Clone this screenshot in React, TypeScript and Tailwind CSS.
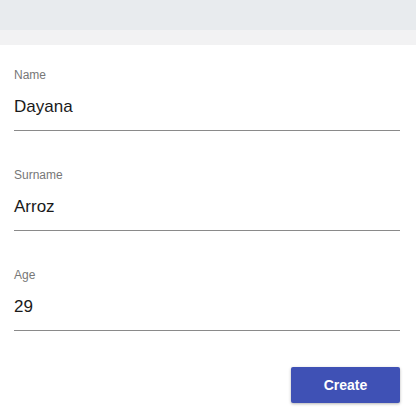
export default function App() {
  const fields = [
    { label: 'Name', value: 'Dayana' },
    { label: 'Surname', value: 'Arroz' },
    { label: 'Age', value: '29' },
  ];

  return (
    <div className="w-[416px] h-[416px] bg-white overflow-hidden" style={{ fontFamily: '"Liberation Sans", Arial, sans-serif' }}>
      <div className="h-[30px] bg-[#e8ebee]" />
      <div className="h-[15px] bg-[#f2f2f3]" />
      <form className="pl-[14px] pr-[16px] pt-[22px] flex flex-col gap-[36px]">
        {fields.map((f) => (
          <div key={f.label} className="flex flex-col">
            <label className="text-[12px] leading-[16px] text-[#777]">{f.label}</label>
            <div className="mt-[12px] pb-[11px] text-[17px] leading-[24px] text-[#1a1a1a] border-b border-[#8a8a8a]">
              {f.value}
            </div>
          </div>
        ))}
        <div className="flex justify-end">
          <button
            type="button"
            className="w-[109px] h-[36px] rounded-[2px] bg-[#3f51b5] text-white text-[14px] font-bold shadow-[0_1px_3px_rgba(0,0,0,0.3)]"
          >
            Create
          </button>
        </div>
      </form>
    </div>
  );
}
